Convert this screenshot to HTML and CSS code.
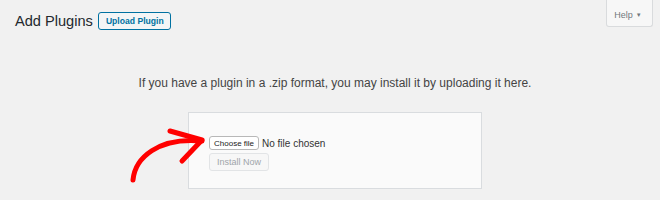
FILE: index.html
```html
<!DOCTYPE html>
<html>
<head>
<meta charset="utf-8">
<link rel="stylesheet" href="styles.css">
</head>
<body>
<div class="page">
  <div class="help-tab">Help <span class="caret">▼</span></div>
  <header class="head">
    <h1 class="title">Add Plugins</h1>
    <span class="upload-btn">Upload Plugin</span>
  </header>
  <p class="intro">If you have a plugin in a .zip format, you may install it by uploading it here.</p>
  <div class="upload-box">
    <div class="file-row">
      <span class="choose-btn">Choose file</span>
      <span class="no-file">No file chosen</span>
    </div>
    <span class="install-btn">Install Now</span>
  </div>
  <svg class="arrow" width="660" height="200" viewBox="0 0 660 200">
    <path d="M133,180 C135,158 158,137 202,141" fill="none" stroke="#ff0000" stroke-width="5" stroke-linecap="round"/>
    <path d="M170,131 L202,140 L182,161" fill="none" stroke="#ff0000" stroke-width="5" stroke-linecap="round" stroke-linejoin="round"/>
  </svg>
</div>
</body>
</html>
```
FILE: styles.css
```css
html, body {
  margin: 0;
  padding: 0;
  background: #f1f1f1;
}
body {
  font-family: "Liberation Sans", Arial, sans-serif;
  color: #23282d;
}
.page {
  position: relative;
  width: 660px;
  height: 200px;
  overflow: hidden;
}
.help-tab {
  position: absolute;
  top: -1px;
  right: 7px;
  width: 47px;
  height: 28px;
  box-sizing: border-box;
  background: #f7f7f7;
  border: 1px solid #d9dbdd;
  border-top: none;
  border-radius: 0 0 3px 3px;
  font-size: 9px;
  color: #72777c;
  display: flex;
  align-items: center;
  justify-content: center;
  gap: 3px;
  padding-top: 4px;
  padding-right: 3px;
}
.caret {
  font-size: 6px;
}
.head {
  display: flex;
  align-items: center;
  gap: 5px;
  padding: 12px 0 0 15px;
}
.title {
  margin: 0;
  font-size: 14.6px;
  font-weight: 400;
  color: #23282d;
  line-height: 18px;
}
.upload-btn {
  display: inline-flex;
  align-items: center;
  height: 18px;
  box-sizing: border-box;
  padding: 0 6px 0 7px;
  border: 1px solid #0071a1;
  border-radius: 3px;
  background: #f3f5f6;
  color: #0071a1;
  font-size: 8.6px;
  font-weight: 700;
}
.intro {
  margin: 0;
  padding-top: 46px;
  text-align: center;
  padding-left: 10px;
  font-size: 12px;
  color: #444;
  line-height: 14px;
}
.upload-box {
  margin: 22px 0 0 188px;
  width: 294px;
  height: 77px;
  box-sizing: border-box;
  background: #fafafa;
  border: 1px solid #d9dcdf;
  padding: 23px 0 0 20px;
  display: flex;
  flex-direction: column;
  align-items: flex-start;
  gap: 3px;
}
.file-row {
  display: flex;
  align-items: center;
  gap: 3px;
}
.choose-btn {
  display: inline-flex;
  align-items: center;
  height: 12px;
  padding: 0 4px;
  border: 1px solid #b8b8b8;
  border-radius: 3px;
  background: #fff;
  font-size: 8px;
  color: #222;
}
.no-file {
  font-size: 10px;
  color: #333;
}
.install-btn {
  display: inline-flex;
  align-items: center;
  height: 18px;
  box-sizing: border-box;
  padding: 0 7px;
  border: 1px solid #e2e4e6;
  border-radius: 3px;
  background: #f7f7f7;
  color: #a0a5aa;
  font-size: 9px;
}
.arrow {
  position: absolute;
  left: 0;
  top: 0;
}
```
